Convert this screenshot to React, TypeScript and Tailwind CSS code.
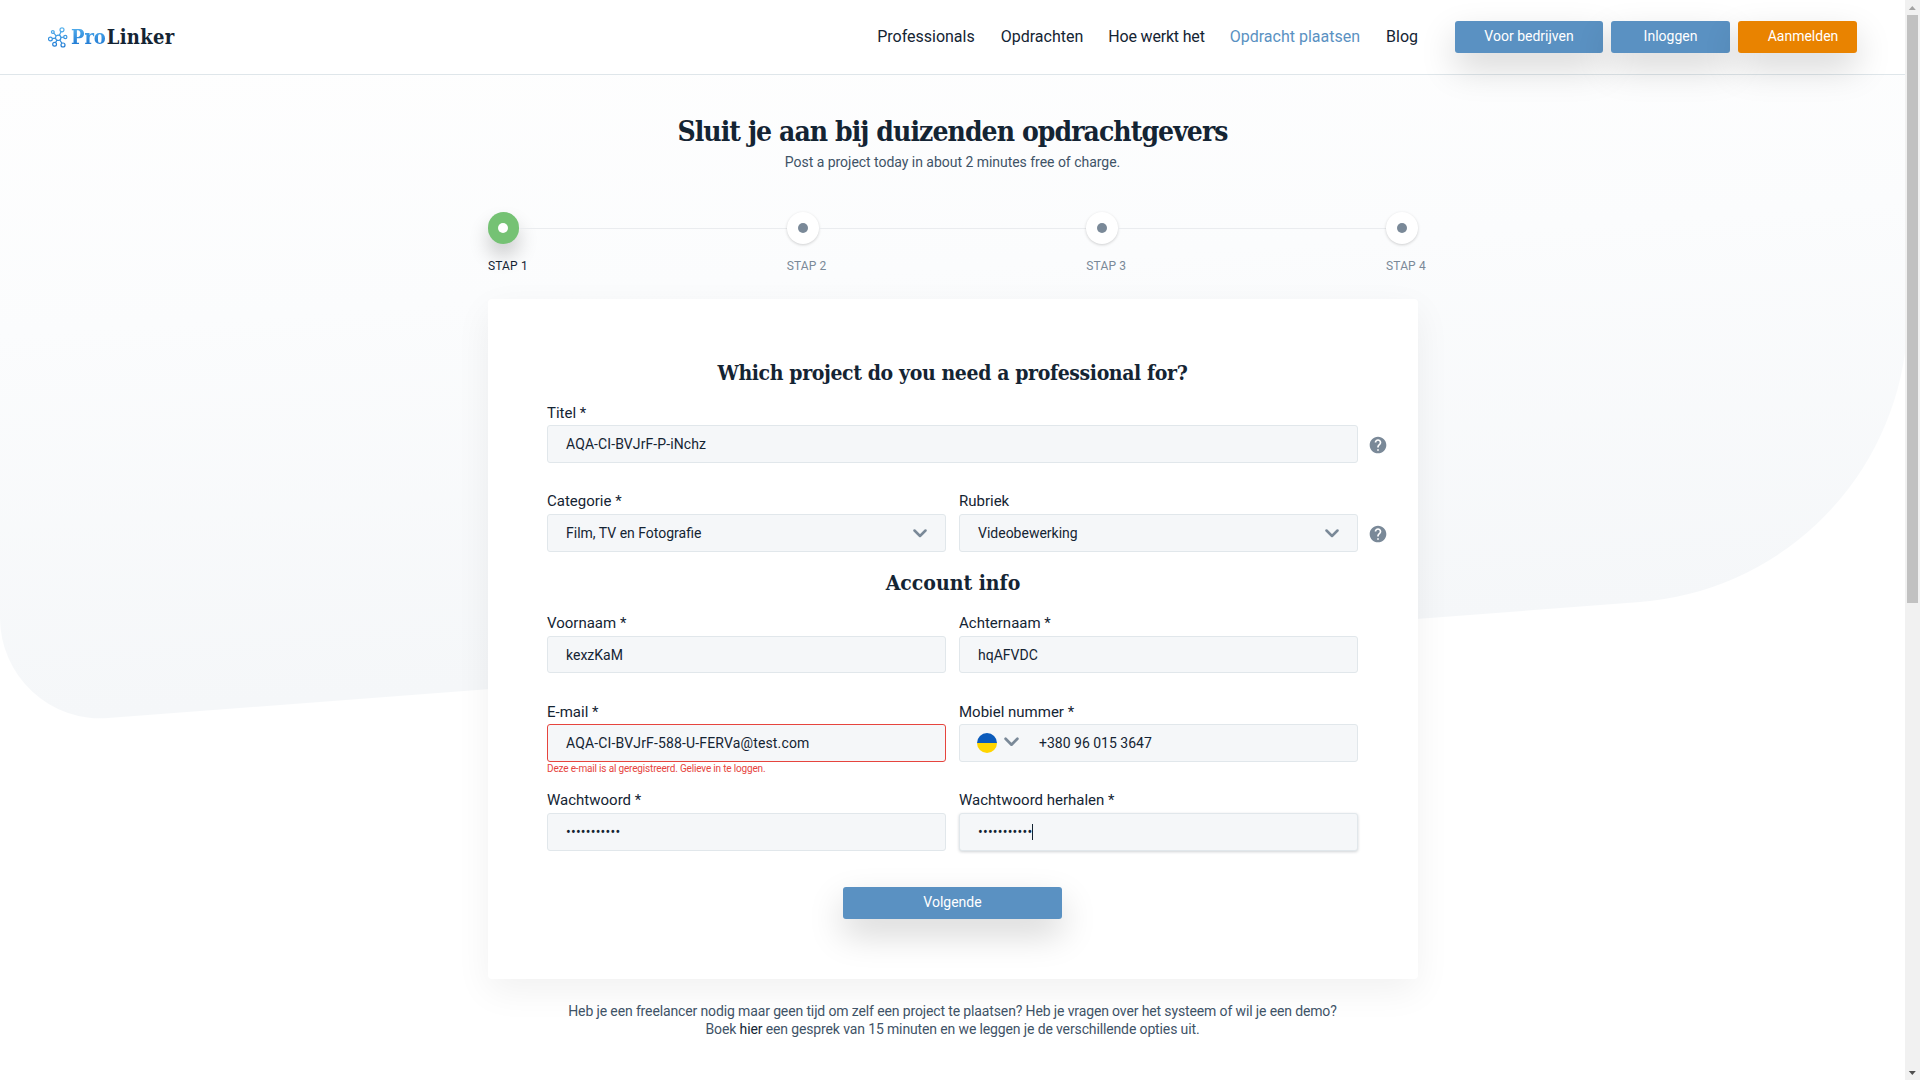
import type { ReactNode } from "react";
import { MdHelp } from "react-icons/md";

const SLAB = "font-['Roboto_Slab','DejaVu_Serif_Condensed','DejaVu_Serif',serif] font-bold";

function LogoMark() {
  return (
    <svg width="20" height="21" viewBox="0 0 20 21" fill="none" strokeWidth="1.2">
      <defs>
        <linearGradient id="mark" x1="0" y1="0" x2="0" y2="21" gradientUnits="userSpaceOnUse">
          <stop offset="0" stopColor="#5bb5ee" />
          <stop offset="1" stopColor="#1976d2" />
        </linearGradient>
      </defs>
      <g stroke="url(#mark)">
        <circle cx="10.2" cy="10.8" r="2.7" />
        <circle cx="14" cy="2.8" r="2" />
        <circle cx="4.8" cy="5" r="1.4" />
        <circle cx="2.4" cy="12" r="1.9" />
        <circle cx="17.3" cy="10" r="1.6" />
        <circle cx="6.6" cy="17.3" r="1.9" />
        <circle cx="15" cy="18" r="2" />
        <path d="M11.4 8.3 13.1 4.6M5.8 6 8.1 8.9M7.5 11.2 4.3 11.7M12.9 10.5 15.7 10.2M8.9 13.2 7.5 15.6M11.8 13 13.9 16.3" />
      </g>
    </svg>
  );
}

function Button({ children, className }: { children: ReactNode; className: string }) {
  return (
    <button
      className={`flex h-8 items-center justify-center rounded-[3px] pb-[2px] text-sm text-white shadow-[0_15px_35px_rgba(0,0,0,0.17)] ${className}`}
    >
      <span>{children}</span>
    </button>
  );
}

function Header() {
  return (
    <header className="flex h-[75px] w-full items-start border-b border-[#dfe6ea] bg-white px-12">
      <div className="flex items-center gap-[3px] pt-[26px]">
        <LogoMark />
        <div className={`flex gap-px text-[20px] leading-[22px] text-[#142433] ${SLAB}`}>
          <span className="bg-gradient-to-b from-[#56b2ee] to-[#1672d0] bg-clip-text tracking-[-0.1px] text-transparent">Pro</span>
          <span className="tracking-[0.3px]">Linker</span>
        </div>
      </div>
      <nav className="ml-auto flex h-full gap-[26px] pt-[25px] text-base leading-6 text-[#142433]">
        <a>Professionals</a>
        <a className="-mr-px">Opdrachten</a>
        <a className="-mr-px tracking-[-0.18px]">Hoe werkt het</a>
        <a className="text-[#5a91c2]">Opdracht plaatsen</a>
        <a>Blog</a>
      </nav>
      <div className="ml-[37px] flex gap-2 pt-[21px]">
        <Button className="w-[148px] bg-[#5a91c2]">Voor bedrijven</Button>
        <Button className="w-[119px] bg-[#5a91c2]">Inloggen</Button>
        <Button className="w-[119px] bg-[#e98300] pl-[11px]">Aanmelden</Button>
      </div>
    </header>
  );
}

function Step({ label, active }: { label: string; active?: boolean }) {
  return (
    <div className="flex w-10 flex-col items-start">
      {active ? (
        <div className="flex h-8 w-[31px] items-center rounded-2xl bg-[#75c274] pl-[10px] shadow-[0_12px_20px_rgba(0,0,0,0.2)]">
          <div className="size-[10px] rounded-full bg-white" />
        </div>
      ) : (
        <div className="flex size-8 items-center justify-center rounded-full bg-white shadow-[0_1px_3px_rgba(0,0,0,0.18)]">
          <div className="size-[10px] rounded-full bg-[#7a8998]" />
        </div>
      )}
      <span className={`mt-[14px] whitespace-nowrap text-xs leading-4 tracking-[0.15px] ${active ? "text-[#142433]" : "text-[#7a8998]"}`}>{label}</span>
    </div>
  );
}

function Stepper() {
  return (
    <div className="flex h-[87px] w-[938px] items-start self-start">
      <Step label="STAP 1" active />
      <div className="-ml-[9px] mt-4 h-px flex-1 bg-[#eaecef]" />
      <Step label="STAP 2" />
      <div className="-ml-2 mt-4 h-px flex-1 bg-[#eaecef]" />
      <Step label="STAP 3" />
      <div className="-ml-2 mt-4 h-px flex-1 bg-[#eaecef]" />
      <Step label="STAP 4" />
    </div>
  );
}

function Chevron({ className }: { className: string }) {
  return (
    <svg viewBox="0 0 14 9" fill="none" stroke="#7a8998" strokeWidth="2.5" strokeLinecap="round" strokeLinejoin="round" className={className}>
      <path d="M1.5 1.5 7 7l5.5-5.5" />
    </svg>
  );
}

type FieldProps = { label: string; gap?: string; box?: string; note?: string; children: ReactNode };

function Field({ label, gap = "mt-[3px]", box = "h-[38px] border-[#e1e7eb]", note, children }: FieldProps) {
  return (
    <div className="flex min-w-0 flex-1 flex-col">
      <label className="text-[15px] leading-5 text-[#142433]">{label}</label>
      <div className={`flex items-center rounded-[3px] border bg-[#f5f7f9] px-[18px] text-sm leading-5 text-[#142433] ${gap} ${box}`}>
        {children}
      </div>
      {note && <p className="mt-px h-0 text-[10px] leading-3 tracking-[-0.17px] text-[#e6453e]">{note}</p>}
    </div>
  );
}

function Row({ className, help, children }: { className: string; help?: string; children: ReactNode }) {
  return (
    <div className={`flex items-start ${className}`}>
      <div className="flex w-[811px] gap-[13px]">{children}</div>
      {help && <MdHelp className={`ml-[10px] size-5 text-[#7a8998] ${help}`} />}
    </div>
  );
}

function ScrollBar() {
  return (
    <div className="flex w-[15px] flex-col items-center bg-[#f1f1f1]">
      <svg width="15" height="15" viewBox="0 0 15 15"><path d="M3.8 10h7L7.3 6z" fill="#a3a3a3" /></svg>
      <div className="h-[588px] w-[11px] bg-[#c1c1c1]" />
      <svg className="mt-auto" width="15" height="15" viewBox="0 0 15 15"><path d="M3.8 6h7l-3.5 4z" fill="#505050" /></svg>
    </div>
  );
}

export default function App() {
  return (
    <div className="flex h-[1080px] w-[1920px] overflow-hidden bg-white font-['Roboto',sans-serif]">
      <div className="relative isolate flex w-[1905px] flex-col items-center">
        <svg className="absolute inset-0 -z-10" width="1905" height="1080" viewBox="0 0 1905 1080">
          <defs>
            <linearGradient id="wash" x1="0" y1="75" x2="45" y2="718" gradientUnits="userSpaceOnUse">
              <stop offset="0" stopColor="#fefefe" />
              <stop offset="0.4" stopColor="#fbfcfd" />
              <stop offset="1" stopColor="#f5f7f9" />
            </linearGradient>
          </defs>
          <path d="M0 75V618A100.5 100.5 0 0 0 108 718L1640 602A290 290 0 0 0 1905 353V75Z" fill="url(#wash)" />
        </svg>
        <Header />
        <h1 className={`mt-9 text-[28px] leading-[42px] tracking-[-0.93px] text-[#142433] ${SLAB}`}>Sluit je aan bij duizenden opdrachtgevers</h1>
        <p className="-mt-px text-sm leading-5 tracking-[-0.03px] text-[#3f5367]">Post a project today in about 2 minutes free of charge.</p>
        <div className="ml-px mt-10 flex w-[930px] flex-col">
          <Stepper />
          <main className="h-[680px] rounded bg-white pl-[59px] shadow-[0_12px_36px_rgba(0,0,0,0.06)]">
            <div className="flex w-[811px] flex-col">
              <h2 className={`mt-[58px] text-center text-[21px] leading-8 tracking-[-0.37px] text-[#142433] ${SLAB}`}>
                Which project do you need a professional for?
              </h2>
            </div>
            <Row className="mt-[14px]" help="mt-8">
              <Field label="Titel *" gap="mt-[2px]"><span className="tracking-[0.1px]">AQA-CI-BVJrF-P-iNchz</span></Field>
            </Row>
            <Row className="mt-7" help="mt-[33px]">
              <Field label="Categorie *"><span className="flex-1">Film, TV en Fotografie</span><Chevron className="h-[9px] w-[14px]" /></Field>
              <Field label="Rubriek"><span className="flex-1">Videobewerking</span><Chevron className="h-[9px] w-[14px]" /></Field>
            </Row>
            <h2 className={`mt-[15px] w-[812px] text-center text-[21px] leading-8 text-[#142433] ${SLAB}`}>Account info</h2>
            <Row className="mt-[14px]">
              <Field label="Voornaam *" box="h-[37px] border-[#e1e7eb]">kexzKaM</Field>
              <Field label="Achternaam *" box="h-[37px] border-[#e1e7eb]">hqAFVDC</Field>
            </Row>
            <Row className="mt-[29px]">
              <Field label="E-mail *" gap="mt-[2px]" box="h-[38px] border-[#e6453e]" note="Deze e-mail is al geregistreerd. Gelieve in te loggen.">
                <span className="tracking-[0.15px]">AQA-CI-BVJrF-588-U-FERVa@test.com</span>
              </Field>
              <Field label="Mobiel nummer *" gap="mt-[2px]">
                <div className="-ml-px flex size-5 flex-col overflow-hidden rounded-full">
                  <i className="flex-1 bg-[#0b5bbb]" />
                  <i className="flex-1 bg-[#ffd500]" />
                </div>
                <Chevron className="-mt-[3px] ml-[7px] h-[10px] w-[15px]" />
                <span className="ml-5">+380 96 015 3647</span>
              </Field>
            </Row>
            <Row className="mt-[27px]">
              <Field label="Wachtwoord *"><span className="tracking-[0.22px]">•••••••••••</span></Field>
              <Field label="Wachtwoord herhalen *" box="h-[38px] border-[#e1e7eb] shadow-[0_1px_3px_rgba(20,36,51,0.2)]">
                <span className="tracking-[0.22px]">•••••••••••</span>
                <i className="h-4 w-px bg-[#142433]" />
              </Field>
            </Row>
            <Button className="ml-[296px] mt-9 w-[219px] bg-[#5a91c2]">Volgende</Button>
          </main>
        </div>
        <p className="mt-[23px] text-center text-sm leading-[18px] tracking-[-0.13px] text-[#3f5367]">
          Heb je een freelancer nodig maar geen tijd om zelf een project te plaatsen? Heb je vragen over het systeem of wil je een demo?
          <br />
          Boek <a className="text-[#142433]">hier</a> een gesprek van 15 minuten en we leggen je de verschillende opties uit.
        </p>
      </div>
      <ScrollBar />
    </div>
  );
}
